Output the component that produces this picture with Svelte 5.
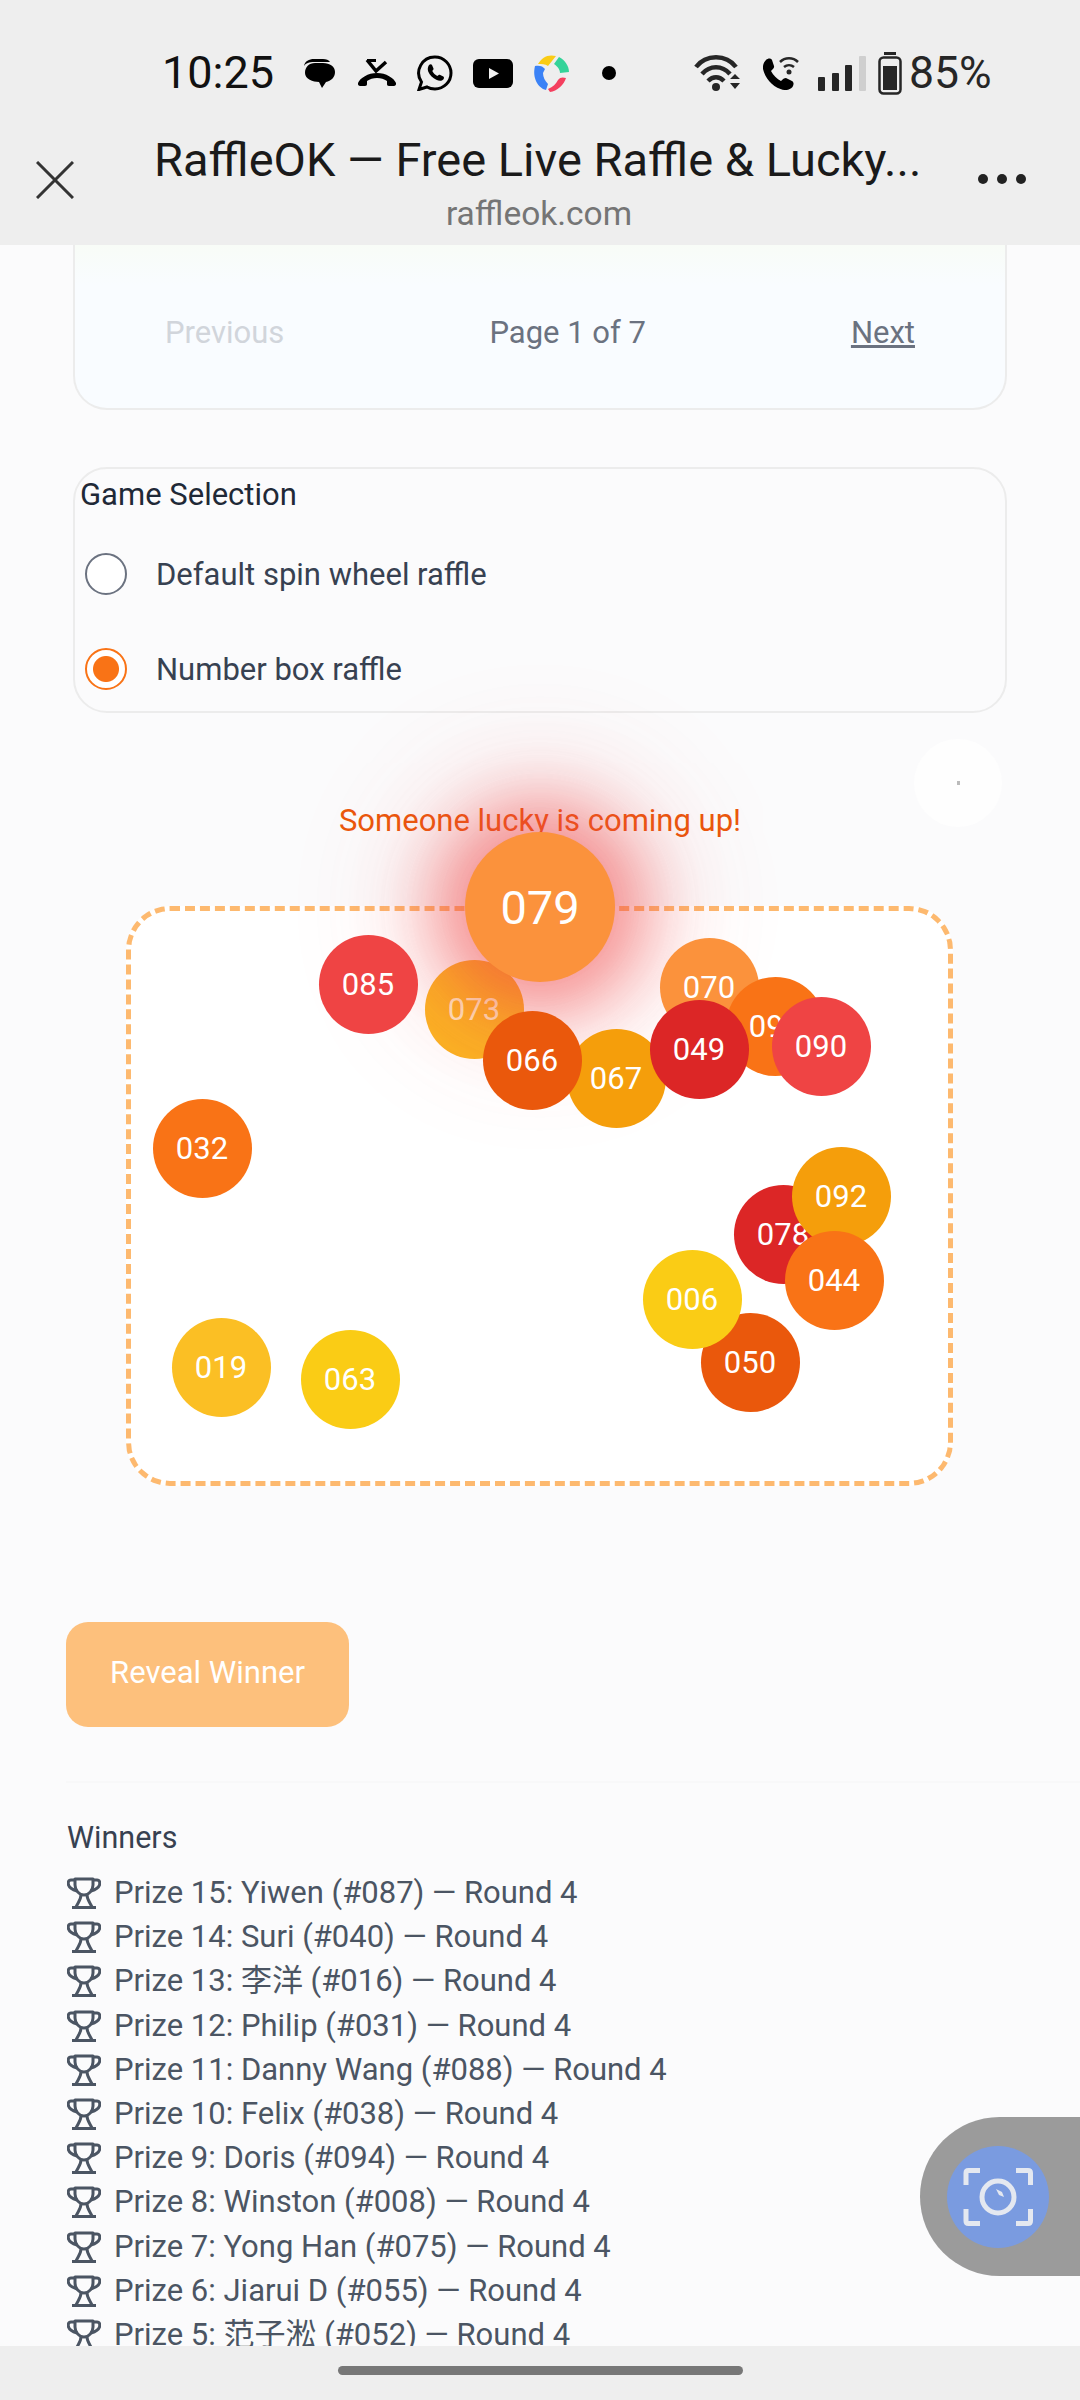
<script>
  // Balls as placed on the dashed box, centre coordinates relative to its padding box.
  // Order is paint order.
  const balls = [
    { n: "032", x: 71, y: 237, c: "#f97316" },
    { n: "073", x: 343, y: 98, c: "#fbb424", faded: true },
    { n: "079", x: 409, y: -4, c: "#fb923c", big: true },
    { n: "085", x: 237, y: 73, c: "#ef4444" },
    { n: "070", x: 578, y: 76, c: "#fb923c" },
    { n: "091", x: 644, y: 115, c: "#f97316" },
    { n: "067", x: 485, y: 167, c: "#f59e0b" },
    { n: "066", x: 401, y: 149, c: "#ea580c" },
    { n: "049", x: 568, y: 138, c: "#dc2626" },
    { n: "090", x: 690, y: 135, c: "#ef4444" },
    { n: "078", x: 652, y: 323, c: "#dc2626" },
    { n: "092", x: 710, y: 285, c: "#f59e0b" },
    { n: "044", x: 703, y: 369, c: "#f97316" },
    { n: "050", x: 619, y: 451, c: "#ea580c" },
    { n: "006", x: 561, y: 388, c: "#facc15" },
    { n: "019", x: 90, y: 456, c: "#fbbf24" },
    { n: "063", x: 219, y: 468, c: "#facc15" },
  ];

  const winners = [
    "Prize 15: Yiwen (#087) — Round 4",
    "Prize 14: Suri (#040) — Round 4",
    "Prize 13: 李洋 (#016) — Round 4",
    "Prize 12: Philip (#031) — Round 4",
    "Prize 11: Danny Wang (#088) — Round 4",
    "Prize 10: Felix (#038) — Round 4",
    "Prize 9: Doris (#094) — Round 4",
    "Prize 8: Winston (#008) — Round 4",
    "Prize 7: Yong Han (#075) — Round 4",
    "Prize 6: Jiarui D (#055) — Round 4",
    "Prize 5: 范子淞 (#052) — Round 4",
  ];
</script>

<div class="phone">
  <header class="chrome">
    <div class="status">
      <span class="time">10:25</span>
      <svg class="ic" style="margin-left:31px" width="32" height="30" viewBox="0 0 32 30" aria-hidden="true">
        <path d="M1 8C2 3 6 1 11 1h9c3 0 6 1 7 3H11C6 4 3 5 1 8z" fill="#000"/>
        <path d="M12 5h8c7 0 12 3.500 12 9s-4 9-9 10l-4 6-3-6c-6 0-14-3-14-9 0-6 4-10 10-10z" fill="#000"/>
      </svg>
      <svg class="ic" style="margin-left:22px" width="40" height="28" viewBox="0 0 40 28" aria-hidden="true">
        <path d="M10 1l9 11 10-9" fill="none" stroke="#000" stroke-width="3.500"/>
        <path d="M10 0h9v3h-9z" fill="#000"/>
        <path d="M1 24c2-5 10-10 19-10s17 5 19 10c.5 2-1 3-2 3h-5c-1.500 0-2-1-2-2v-3c-3-2-6-3-10-3s-7 1-10 3v3c0 1-.5 2-2 2H3c-1 0-2.500-1-2-3z" fill="#000"/>
      </svg>
      <svg class="ic" style="margin-left:20px" width="36" height="36" viewBox="0 0 36 36" aria-hidden="true">
        <path d="M18 2a16 16 0 0 1 0 32c-3 0-6-.8-8-2l-8 2.500 2.500-7.500A16 16 0 0 1 18 2z" fill="none" stroke="#000" stroke-width="3"/>
        <path d="M12 10c1-1 2.500-1 3 0l1.500 3.500c.3.800-.5 1.500-1.200 2.500 1 2 3 4 5 5 1-.7 1.700-1.500 2.500-1.200l3.500 1.700c1 .5.800 2 0 3-1.500 1.500-4 1.700-7 .3-3.500-1.500-6.500-4.500-8-8-1-3-.5-5 .7-6.800z" fill="#000"/>
      </svg>
      <svg class="ic" style="margin-left:20px" width="40" height="29" viewBox="0 0 40 29" aria-hidden="true">
        <rect width="40" height="29" rx="6" fill="#000"/>
        <path d="M16 9l10 5.500-10 5.500z" fill="#f2f2f2"/>
      </svg>
      <svg class="ic" style="margin-left:19px" width="38" height="39" viewBox="0 0 38 39" aria-hidden="true">
        <path d="M6 10C10 3 16 0 24 2L16 12c-3-2-6-2-10-2z" fill="#facc15"/>
        <path d="M27 3c6 3 10 9 10 15l-9 1c0-4-3-7-6-9z" fill="#34d399"/>
        <path d="M34 24c-2 7-9 13-16 14l-2-3c5-2 8-5 10-9 2-3 5-3 8-2z" fill="#f43f5e"/>
        <path d="M3 12c4-1 8 0 10 3l-2 4c0 4 2 8 5 11l-2 6C6 34 0 24 3 12z" fill="#3b82f6"/>
      </svg>
      <span class="dot"></span>
      <svg class="ic" style="margin-left:78px" width="48" height="38" viewBox="0 0 48 38" aria-hidden="true">
        <g fill="none" stroke="#262626" stroke-width="4.500">
          <path d="M2 13C12 0 32 0 42 13"/>
          <path d="M8 20c8-9 20-9 28 0"/>
          <path d="M14 27c5-5 11-5 16 0"/>
        </g>
        <circle cx="22" cy="33" r="4" fill="#262626"/>
        <path d="M36 25l5-5 5 5zM36 29l5 6 5-6z" fill="#262626"/>
      </svg>
      <svg class="ic" style="margin-left:21px" width="36" height="34" viewBox="0 0 36 34" aria-hidden="true">
        <path d="M3 2c2-2 5-2 6 0l2 6c.5 2-1 3-3 5 2 4 6 8 10 10 2-2 3-3 5-3l6 3c2 1 2 4 .5 6-3 3-7 4-12 2C9 28 2 20 0 11-.5 7 1 4 3 2z" fill="#000" transform="translate(0 2)"/>
        <g fill="none" stroke="#262626" stroke-width="2.500">
          <path d="M17 6c5-5 13-5 18 0"/>
          <path d="M21 11c3-2.500 7-2.500 10 0"/>
        </g>
        <circle cx="26" cy="16" r="2.500" fill="#262626"/>
      </svg>
      <svg class="ic" style="margin-left:19px" width="48" height="35" viewBox="0 0 48 35" aria-hidden="true">
        <rect x="0" y="21" width="7" height="14" rx="1" fill="#262626"/>
        <rect x="14" y="17" width="7" height="18" rx="1" fill="#262626"/>
        <rect x="27" y="9" width="7" height="26" rx="1" fill="#262626"/>
        <rect x="41" y="0" width="7" height="35" rx="1" fill="#cfcfcf"/>
      </svg>
      <svg class="ic" style="margin-left:12px" width="24" height="43" viewBox="0 0 24 43" aria-hidden="true">
        <rect x="6" y="0" width="12" height="3" fill="#262626"/>
        <rect x="1.500" y="5.500" width="21" height="36" rx="4" fill="none" stroke="#262626" stroke-width="2.500"/>
        <rect x="5" y="14" width="14" height="24" fill="#262626"/>
      </svg>
      <span class="pct">85%</span>
    </div>
    <div class="tab">
      <svg class="close" width="38" height="38" viewBox="0 0 38 38" aria-hidden="true">
        <path d="M1 1l36 36M37 1L1 37" stroke="#333" stroke-width="3" fill="none"/>
      </svg>
      <div class="tab-text">
        <div class="tab-title">RaffleOK — Free Live Raffle &amp; Lucky...</div>
        <div class="tab-url">raffleok.com</div>
      </div>
      <div class="more"><i></i><i></i><i></i></div>
    </div>
  </header>

  <main class="content">
    <div class="pager">
      <span class="prev">Previous</span>
      <span class="pg">Page 1 of 7</span>
      <span class="next">Next</span>
    </div>

    <section class="games">
      <div class="games-title">Game Selection</div>
      <div class="radio-row">
        <span class="radio"></span>
        <span>Default spin wheel raffle</span>
      </div>
      <div class="radio-row on">
        <span class="radio"></span>
        <span>Number box raffle</span>
      </div>
    </section>

    <section class="stage">
      <span class="ghost"><i></i></span>
      <div class="lucky">Someone lucky is coming up!</div>
      <div class="box">
        {#each balls as b (b.n)}
          <div
            class="ball"
            class:big={b.big}
            class:faded={b.faded}
            style="left:{b.x}px;top:{b.y}px;background:{b.c}"
          >{b.n}</div>
        {/each}
      </div>
    </section>

    <button class="reveal">Reveal Winner</button>
    <hr />

    <div class="winners-title">Winners</div>
    <ul class="winners">
      {#each winners as w}
        <li>
          <svg width="34" height="32" viewBox="0 0 34 32" aria-hidden="true">
            <g fill="none" stroke="#4b5563" stroke-width="3" stroke-linejoin="round">
              <path d="M8 2h18v6c0 5-4 10-9 10S8 13 8 8z"/>
              <path d="M8 3H4C1 3 1 6 1.500 8 2.500 11 5 12.500 10 14"/>
              <path d="M26 3h4c3 0 3 3 2.500 5-1 3-3.500 4.500-8.500 6"/>
              <path d="M14 18c0 4-2 6-5 12M20 18c0 4 2 6 5 12"/>
              <path d="M5 30.500h24"/>
            </g>
          </svg>
          <span>{w}</span>
        </li>
      {/each}
    </ul>
  </main>

  <footer class="navbar"><span class="handle"></span></footer>

  <div class="capture">
    <span class="capture-btn">
      <svg width="70" height="58" viewBox="0 0 70 58" aria-hidden="true">
        <g fill="none" stroke="#e4e8f0" stroke-width="5">
          <path d="M3 17V5q0-2.500 2.500-2.500H17"/>
          <path d="M53 2.500h12q2.500 0 2.500 2.500v12"/>
          <path d="M3 41v12q0 2.500 2.500 2.500H17"/>
          <path d="M53 55.500h12q2.500 0 2.500-2.500V41"/>
          <circle cx="35" cy="29" r="16"/>
        </g>
        <path d="M33 21l6 3 2 5-5-2z" fill="#e4e8f0"/>
      </svg>
    </span>
  </div>
</div>

<style>
  :global(body) {
    margin: 0;
    background: #fbfbfc;
  }

  .phone {
    position: relative;
    width: 1080px;
    height: 2400px;
    display: flex;
    flex-direction: column;
    overflow: hidden;
    background: #fbfbfc;
    font-family: Roboto, "Noto Sans CJK SC", sans-serif;
  }

  /* ── browser chrome ── */
  .chrome {
    flex: none;
    height: 245px;
    box-sizing: border-box;
    background: #eeeeee;
    padding-top: 51px;
  }

  .status {
    height: 44px;
    display: flex;
    align-items: center;
    padding-left: 162px;
    color: #111;
  }
  .time { font-size: 45px; line-height: 44px; width: 110px; }
  .pct { font-size: 44.500px; line-height: 44px; margin-left: 7px; color: #262626; }
  .ic { flex: none; display: block; }
  .dot {
    flex: none;
    width: 14px;
    height: 14px;
    margin-left: 32px;
    border-radius: 50%;
    background: #000;
  }

  .tab {
    position: relative;
    height: 100px;
    margin-top: 36px;
  }
  .close { position: absolute; left: 36px; top: 30px; }
  .tab-text { text-align: center; }
  .tab-title {
    width: 766px;
    margin-left: 154px;
    font-size: 47px;
    line-height: 58px;
    color: #1a1a1a;
    white-space: nowrap;
    text-align: center;
  }
  .tab-url {
    margin-top: 5px;
    font-size: 33.500px;
    line-height: 40px;
    color: #757575;
    width: 1078px;
  }
  .more {
    position: absolute;
    left: 978px;
    top: 43px;
    display: flex;
    gap: 9px;
  }
  .more i {
    width: 10px;
    height: 10px;
    border-radius: 50%;
    background: #222;
  }

  /* ── page ── */
  .content {
    flex: 1;
    min-height: 0;
    overflow: hidden;
  }

  .pager {
    box-sizing: border-box;
    width: 934px;
    height: 165px;
    margin-left: 73px;
    padding: 12px 90px 0 90px;
    display: flex;
    align-items: center;
    justify-content: space-between;
    font-size: 31px;
    background: linear-gradient(#f8fcf7 0, #f9fcff 40px);
    border: 2px solid #ececec;
    border-top: none;
    border-radius: 0 0 34px 34px;
  }
  .prev { color: #d1d5db; }
  .pg { color: #6b7280; }
  .next { color: #6b7280; text-decoration: underline; }

  .games {
    box-sizing: border-box;
    width: 934px;
    height: 246px;
    margin: 57px 0 0 73px;
    padding: 8px 0 0 5px;
    border: 2px solid #ececec;
    border-radius: 34px;
    font-size: 31px;
  }
  .games-title { line-height: 36px; color: #1f2937; }
  .radio-row {
    display: flex;
    align-items: center;
    gap: 29px;
    height: 44px;
    margin: 39px 0 0 5px;
    color: #374151;
  }
  .games-title + .radio-row { margin-top: 39px; }
  .radio-row + .radio-row { margin-top: 51px; }
  .radio {
    box-sizing: border-box;
    flex: none;
    width: 42px;
    height: 42px;
    border: 2.500px solid #6b7280;
    border-radius: 50%;
    background: #fff;
  }
  .on .radio {
    border-color: #f97316;
    background: radial-gradient(circle, #f97316 0 12.500px, #fff 13.500px);
  }

  /* ── number box ── */
  .stage {
    position: relative;
    padding-top: 88px;
  }
  .ghost {
    position: absolute;
    left: 914px;
    top: 26px;
    width: 88px;
    height: 88px;
    border-radius: 50%;
    background: #fefefe;
    display: flex;
    align-items: center;
    justify-content: center;
  }
  .ghost i { width: 3px; height: 4px; background: #bbb; }

  .lucky {
    font-size: 31px;
    line-height: 40px;
    text-align: center;
    color: #ea580c;
  }

  .box {
    position: relative;
    box-sizing: border-box;
    width: 827px;
    height: 580px;
    margin: 65px 0 0 126px;
    background: #fff;
    border: 5px dashed #fdb96f;
    border-radius: 44px;
  }

  .ball {
    position: absolute;
    width: 99px;
    height: 99px;
    margin: -49.500px 0 0 -49.500px;
    border-radius: 50%;
    display: flex;
    align-items: center;
    justify-content: center;
    font-size: 31px;
    color: #fff;
  }
  .ball.faded { color: rgba(255, 255, 255, 0.72); }
  .ball.big {
    width: 150px;
    height: 150px;
    margin: -75px 0 0 -75px;
    font-size: 47px;
    box-shadow: 0 0 70px 30px rgba(239, 68, 68, 0.55), 0 0 130px 60px rgba(239, 68, 68, 0.14);
  }

  .reveal {
    display: block;
    width: 283px;
    height: 105px;
    margin: 136px 0 0 66px;
    padding: 0 0 4px;
    border: none;
    border-radius: 22px;
    background: #fdc07c;
    color: #fff;
    font: 31px Roboto, sans-serif;
  }

  hr {
    height: 2px;
    margin: 54px 0 33px 66px;
    border: none;
    background: #f8f8f9;
  }

  .winners-title {
    margin-left: 67px;
    font-size: 30.500px;
    line-height: 44px;
    color: #374151;
  }

  .winners {
    list-style: none;
    margin: 11px 0 0 67px;
    padding: 0;
  }
  .winners li {
    display: flex;
    align-items: center;
    gap: 13px;
    height: 44.200px;
    line-height: 44.200px;
    font-size: 31px;
    color: #4b5563;
    white-space: nowrap;
  }
  .winners svg { flex: none; }

  /* ── bottom bars ── */
  .navbar {
    flex: none;
    height: 54px;
    background: #eeeeee;
    display: flex;
    justify-content: center;
    padding-top: 20px;
    box-sizing: border-box;
  }
  .handle {
    width: 405px;
    height: 9px;
    border-radius: 5px;
    background: #777;
  }

  .capture {
    position: absolute;
    left: 920px;
    top: 2117px;
    width: 160px;
    height: 159px;
    box-sizing: border-box;
    padding-left: 27px;
    display: flex;
    align-items: center;
    background: #9b9b9b;
    border-radius: 80px 0 0 80px;
  }
  .capture-btn {
    width: 102px;
    height: 102px;
    border-radius: 50%;
    background: #7a9be0;
    display: flex;
    align-items: center;
    justify-content: center;
  }
</style>
